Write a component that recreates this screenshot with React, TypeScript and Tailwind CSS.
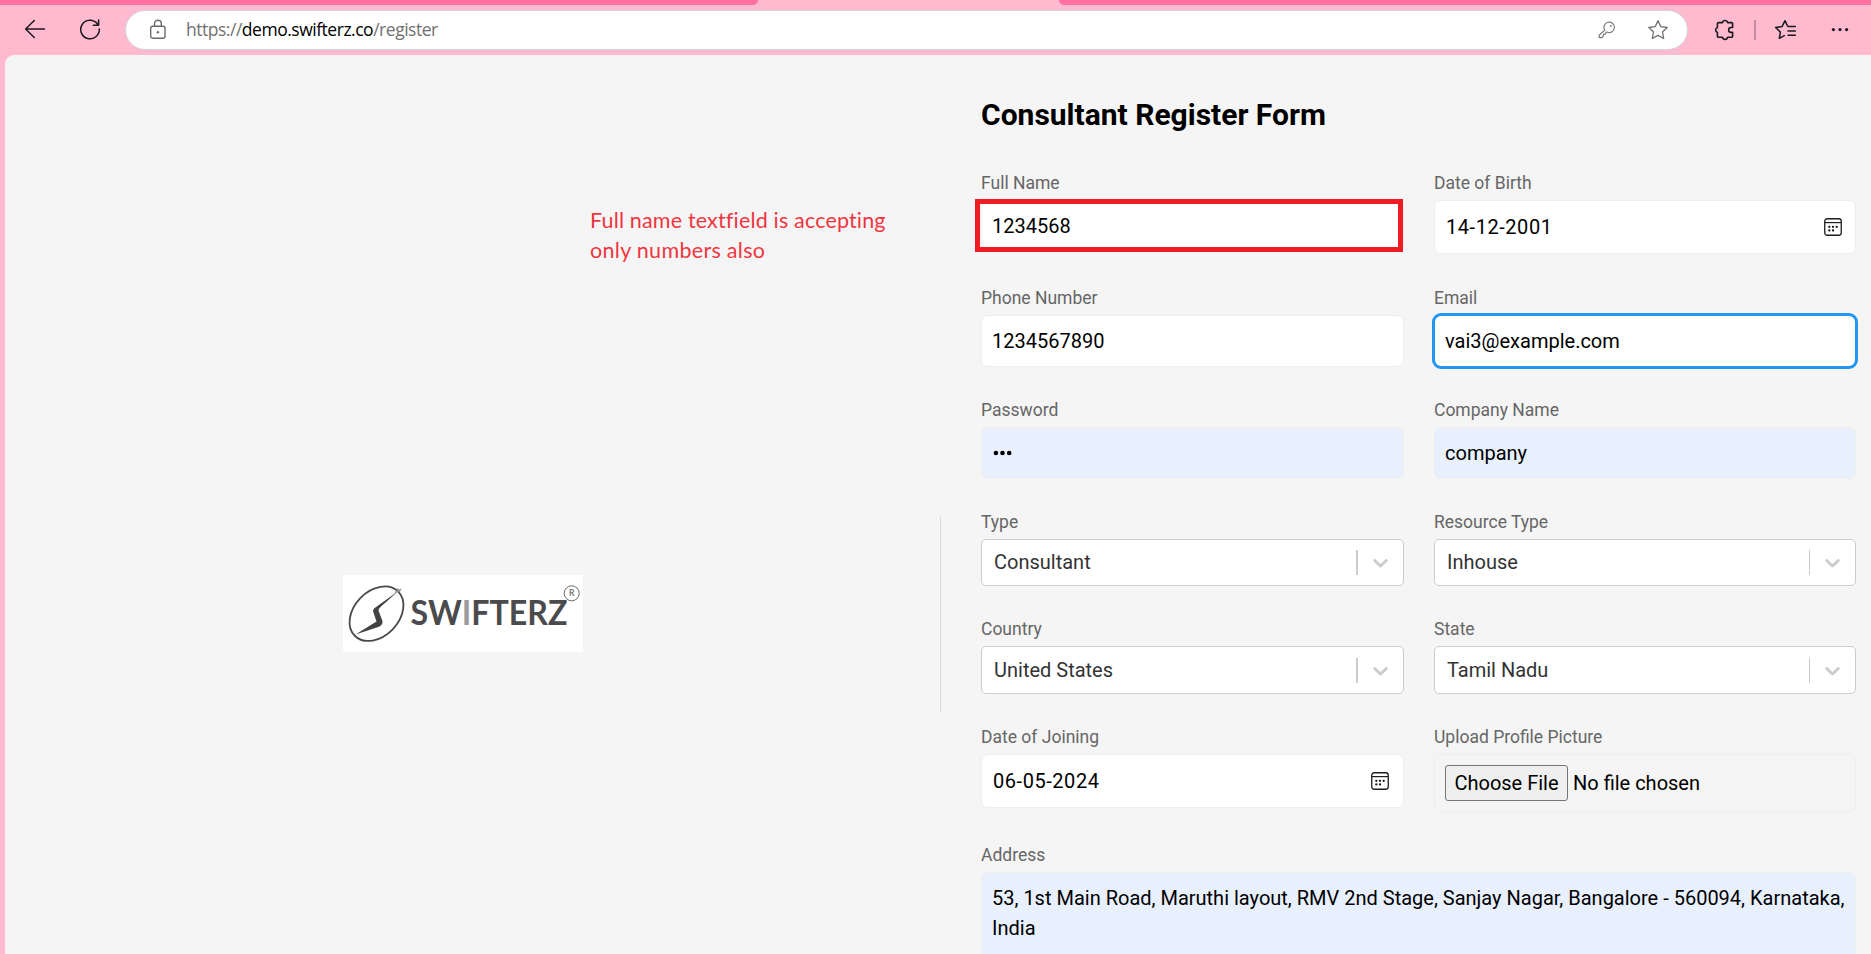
import type { ReactNode } from "react";

function Chevron() {
  return (
    <svg width="25" height="25" viewBox="0 0 20 20" fill="#cccccc">
      <path d="M4.516 7.548c0.436-0.446 1.043-0.481 1.576 0l3.908 3.747 3.908-3.747c0.533-0.481 1.141-0.446 1.574 0 0.436 0.445 0.408 1.197 0 1.615-0.406 0.418-4.695 4.502-4.695 4.502-0.217 0.223-0.502 0.335-0.787 0.335s-0.57-0.112-0.789-0.335c0 0-4.287-4.084-4.695-4.502s-0.436-1.17 0-1.615z" />
    </svg>
  );
}

function CalendarIcon() {
  return (
    <svg width="18" height="18" viewBox="0 0 18 18" fill="none" stroke="#1c1c1c">
      <rect x="0.75" y="0.75" width="16.5" height="16.5" rx="2.5" strokeWidth="1.3" />
      <path d="M1 4.6h16" strokeWidth="1.2" />
      <g fill="#111" stroke="none">
        <circle cx="5.3" cy="8.8" r="1.15" />
        <circle cx="9" cy="8.8" r="1.15" />
        <circle cx="12.7" cy="8.8" r="1.15" />
        <circle cx="5.3" cy="12.4" r="1.15" />
        <circle cx="9" cy="12.4" r="1.15" />
      </g>
    </svg>
  );
}

function Field({ label, children, className = "" }: { label: string; children: ReactNode; className?: string }) {
  return (
    <div className={`flex flex-col ${className}`}>
      <div className="mb-[4px] h-[26px] text-[17.5px] leading-[26px] text-[#666666]">{label}</div>
      {children}
    </div>
  );
}

function TextBox({ children, className = "bg-white border-[#eeeeee]" }: { children: ReactNode; className?: string }) {
  return (
    <div className={`flex h-[52px] items-center rounded-[7px] border px-[10px] text-[20px] text-black ${className}`}>
      {children}
    </div>
  );
}

function DateBox({ value, className = "pr-[13px]" }: { value: string; className?: string }) {
  return (
    <div className={`flex h-[54px] items-center justify-between rounded-[7px] border border-[#eeeeee] bg-white pl-[11px] text-[20px] tracking-[0.55px] text-black ${className}`}>
      <span>{value}</span>
      <CalendarIcon />
    </div>
  );
}

function SelectBox({ value, sep, className = "h-[47px]" }: { value: string; sep: string; className?: string }) {
  return (
    <div className={`flex items-center rounded-[5px] border border-[#cccccc] bg-white pl-[12px] pr-[10px] text-[20px] text-[#333333] ${className}`}>
      <span className="grow pb-px">{value}</span>
      <span className={`mr-[10px] h-[25px] bg-[#cccccc] ${sep}`} />
      <Chevron />
    </div>
  );
}

function StarIcon() {
  return (
    <svg width="22" height="22" viewBox="0 0 22 22" fill="none" stroke="#707070" strokeWidth="1.3" strokeLinejoin="round">
      <path d="M11 1.7l2.8 5.9 6.4.9-4.7 4.5 1.2 6.5L11 16.4l-5.7 3.1 1.2-6.5L1.8 8.5l6.4-.9z" />
    </svg>
  );
}

function Toolbar() {
  return (
    <header className="flex h-[55px] shrink-0 flex-col bg-[#ffbad0]">
      <div className="flex h-[5px] shrink-0 justify-between">
        <div className="w-[758px] rounded-br-[10px] bg-[#ff6fa0]" />
        <div className="w-[812px] rounded-bl-[10px] bg-[#ff6fa0]" />
      </div>
      <div className="mt-[5px] flex h-[40px] items-center">
        <svg className="ml-[24px]" width="22" height="22" viewBox="0 0 22 22" fill="none" stroke="#1a1a1a" strokeWidth="1.5" strokeLinecap="round" strokeLinejoin="round">
          <path d="M20.5 10H1.8M10.3 1.5L1.6 10l8.7 8.5" />
        </svg>
        <svg className="ml-[33px]" width="22" height="22" viewBox="0 0 22 22" fill="none" stroke="#1a1a1a" strokeWidth="1.5" strokeLinecap="round" strokeLinejoin="round">
          <path d="M20.3 10a9.3 9.3 0 1 1-2.1-5.4L19.6 6M19.6 1v5.2h-5.2" />
        </svg>
        <div className="ml-[24px] flex h-[40px] w-[1563px] items-center rounded-full border border-[#d2d2d4] bg-white">
          <svg className="ml-[22.5px]" width="18" height="22" viewBox="0 0 18 22" fill="none" stroke="#6b6b6b" strokeWidth="1.4">
            <rect x="1.7" y="7.2" width="14.3" height="12" rx="2" />
            <path d="M5.5 7.2V4.6a3.4 3.4 0 0 1 6.8 0v2.6" />
            <circle cx="8.9" cy="13.2" r="1.2" fill="#6b6b6b" stroke="none" />
          </svg>
          <div className="ml-[19.5px] grow whitespace-pre pb-px font-['Open_Sans'] text-[17.5px] tracking-[-0.48px] text-[#717171]">
            https://<span className="text-black">demo.swifterz.co</span>/register
          </div>
          <svg width="18" height="18" viewBox="0 0 18 18" fill="none" stroke="#7a7a7a" strokeWidth="1.2" strokeLinejoin="round">
            <path d="M6.8 9.1A5.2 5.2 0 1 1 9.4 11.2L8.2 11.2 7.6 12.9 5.8 13.2 5.3 15 3.9 16.6H1.2V14.3z" />
            <circle cx="12.9" cy="5" r="0.9" fill="#7a7a7a" stroke="none" />
          </svg>
          <div className="ml-[31px] mr-[18px]"><StarIcon /></div>
        </div>
        <svg className="ml-[26px]" width="22" height="22" viewBox="0 0 22 22" fill="none" stroke="#1a1a1a" strokeWidth="1.6" strokeLinejoin="round">
          <path d="M4.5 3.6h4a2.6 2.6 0 0 1 5.1 0h3.9q1.1 0 1.1 1.1v3.8h-1.5a2.4 2.4 0 0 0 0 4.9h1.5v3.8q0 1.1-1.1 1.1h-3.9a2.6 2.6 0 0 1-5.1 0h-4q-1.1 0-1.1-1.1v-3.8a2.6 2.6 0 0 1 0-4.9V4.7q0-1.1 1.1-1.1z" />
        </svg>
        <div className="ml-[18px] h-[20px] w-[2px] bg-[#c48d9f]" />
        <svg className="ml-[18px]" width="24" height="22" viewBox="0 0 24 22" fill="none" stroke="#1a1a1a" strokeWidth="1.5" strokeLinejoin="round" strokeLinecap="round">
          <path d="M10.3 16.7l-5 2.6 1.1-6.2L1.6 8.5l6.4-.9L11 1.7l2.4 4.9M14 7.6h7.3M14 12h7.3M14 16.2h7.3" />
        </svg>
        <svg className="ml-[32px]" width="20" height="6" viewBox="0 0 20 6" fill="#1a1a1a">
          <circle cx="3.4" cy="2.6" r="1.6" />
          <circle cx="10" cy="2.6" r="1.6" />
          <circle cx="16.6" cy="2.6" r="1.6" />
        </svg>
      </div>
    </header>
  );
}

function Logo() {
  return (
    <svg width="240" height="77" viewBox="0 0 240 77" className="bg-white">
      <ellipse cx="33.5" cy="38.7" rx="31" ry="22.5" transform="rotate(-46 33.5 38.7)" fill="none" stroke="#4a4a4c" strokeWidth="1.8" />
      <path d="M56 15.5L31 33.5Q29.5 35 30.3 37L33.5 46.5 12.5 59.5 36 51.8Q40.5 49.5 39.3 45.5L35.5 35.5Q35.5 33.5 37.5 32z" fill="#434345" />
      <path d="M52 17.5L58.3 14.2M54 13.6l3 3.2" stroke="#9a9a9a" strokeWidth="1.5" />
      <text x="67.5" y="50.3" textLength="157" lengthAdjust="spacingAndGlyphs" fontFamily="Lato, sans-serif" fontWeight="700" fontSize="34.5" fill="#4b4b4d">
        SW<tspan fill="#9b9b9b">I</tspan>FTERZ
      </text>
      <circle cx="228.7" cy="18.3" r="7.5" fill="none" stroke="#6a6a6a" strokeWidth="1" />
      <text x="228.7" y="21.4" textAnchor="middle" fontFamily="Lato, sans-serif" fontWeight="700" fontSize="8.5" fill="#777">R</text>
    </svg>
  );
}

export default function App() {
  return (
    <div className="flex h-[954px] w-[1871px] flex-col overflow-hidden bg-[#ffbad0] font-[Roboto,sans-serif]">
      <Toolbar />
      <main className="ml-[5px] flex min-h-0 grow rounded-tl-[9px] bg-[#f5f5f5]">
        <section className="flex w-[935px] flex-col items-start">
          <p className="ml-[585px] mt-[150px] whitespace-pre font-[Lato,sans-serif] text-[21.5px] leading-[30px] text-[#f0353f]">
            <span className="block tracking-[0.17px]">Full name textfield is accepting</span>
            <span className="block tracking-[0.3px]">only numbers also</span>
          </p>
          <div className="ml-[338px] mt-[310px]"><Logo /></div>
        </section>
        <div className="mt-[461px] h-[196px] w-px bg-[#dcdcdc]" />
        <section className="ml-[40px] w-[875px]">
          <h1 className="mt-[37px] h-[45px] text-[30px] font-bold leading-[45px] text-black">Consultant Register Form</h1>
          <div className="mt-[33px] grid grid-cols-[423px_422px] grid-rows-[115px_112px_112px_107px_108px_118px_120px] gap-x-[30px]">
            <Field label="Full Name" className="relative">
              <TextBox>1234568</TextBox>
              <div className="absolute -left-[6px] top-[29px] h-[53px] w-[428px] border-[5px] border-[#ef1c24]" />
            </Field>
            <Field label="Date of Birth"><DateBox value="14-12-2001" /></Field>
            <Field label="Phone Number"><TextBox>1234567890</TextBox></Field>
            <Field label="Email">
              <TextBox className="border-transparent bg-white outline-[3px] -outline-offset-1 outline-[#2196f3]">vai3@example.com</TextBox>
            </Field>
            <Field label="Password">
              <TextBox className="border-[#eeeeee] bg-[#e8f0fe]">
                <svg className="ml-px" width="20" height="6" viewBox="0 0 20 6">
                  <circle cx="2.9" cy="3" r="2.3" />
                  <circle cx="9.5" cy="3" r="2.3" />
                  <circle cx="16.2" cy="3" r="2.3" />
                </svg>
              </TextBox>
            </Field>
            <Field label="Company Name">
              <TextBox className="border-[#eeeeee] bg-[#e8f0fe]">company</TextBox>
            </Field>
            <Field label="Type"><SelectBox value="Consultant" sep="w-[2px]" /></Field>
            <Field label="Resource Type"><SelectBox value="Inhouse" sep="w-px" /></Field>
            <Field label="Country"><SelectBox value="United States" sep="w-[2px]" className="h-[48px]" /></Field>
            <Field label="State"><SelectBox value="Tamil Nadu" sep="w-px" className="h-[48px]" /></Field>
            <Field label="Date of Joining"><DateBox value="06-05-2024" className="pr-[14px]" /></Field>
            <Field label="Upload Profile Picture">
              <div className="flex h-[58px] items-center rounded-[7px] border border-[#eeeeee] px-[10px] text-[20px] text-black">
                <button className="h-[36px] w-[123px] rounded-[3px] border border-[#767676] bg-[#efefef]">Choose File</button>
                <span className="ml-[5px]">No file chosen</span>
              </div>
            </Field>
            <Field label="Address" className="col-span-2">
              <div className="h-[120px] rounded-[7px] border border-[#eeeeee] bg-[#e8f0fe] px-[10px] pt-[10px] text-[20px] leading-[30px] text-black">
                53, 1st Main Road, Maruthi layout, RMV 2nd Stage, Sanjay Nagar, Bangalore - 560094, Karnataka, India
              </div>
            </Field>
          </div>
        </section>
      </main>
    </div>
  );
}
